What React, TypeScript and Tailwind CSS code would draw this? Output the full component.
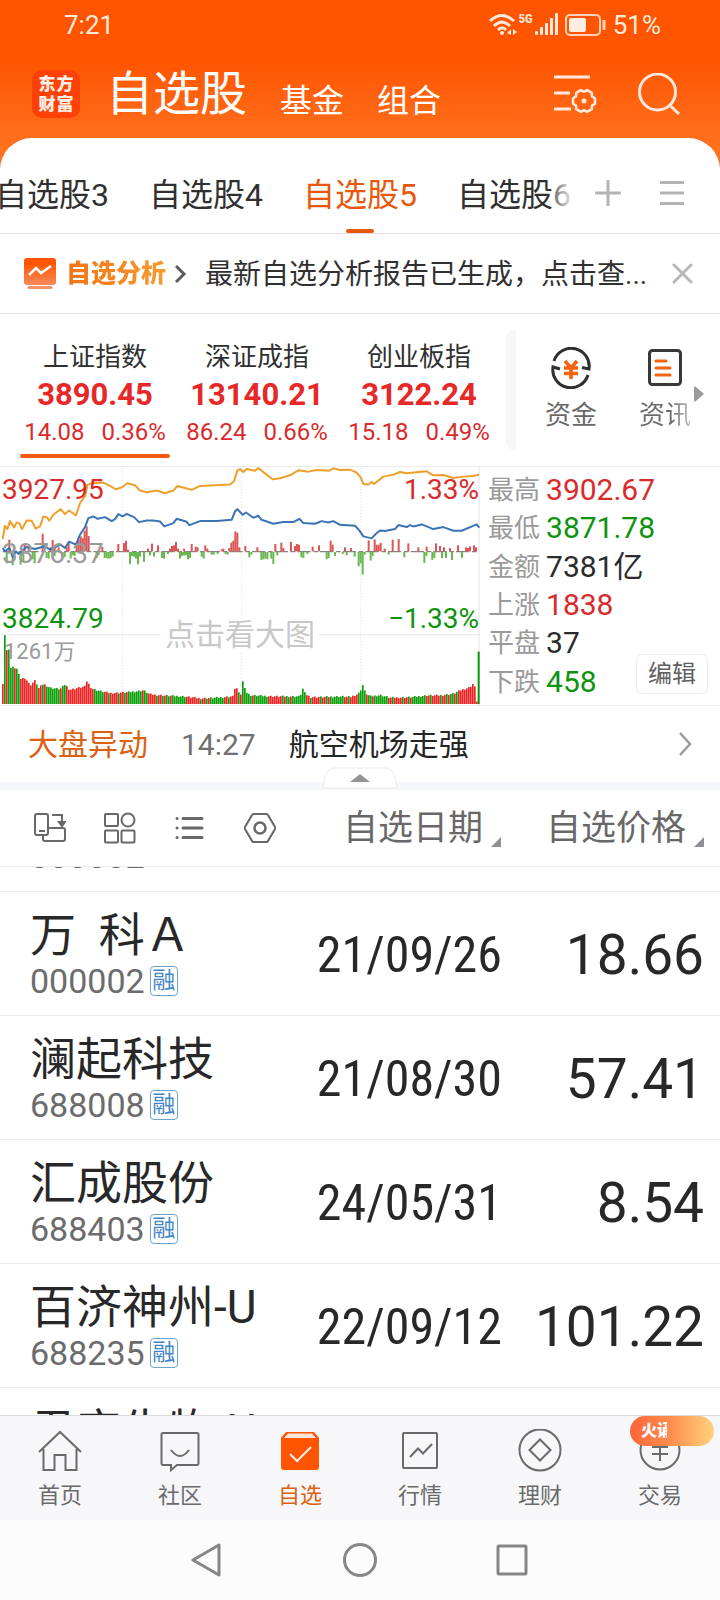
import { ReactNode, useState } from 'react'

type Index = {
  name: string
  price: string
  change: string
  percent: string
}

type Stock = {
  name: string
  code: string
  date: string
  price: string
  margin: boolean
}

const groups = ['自选股3', '自选股4', '自选股5', '自选股6']

const indexes: Index[] = [
  { name: '上证指数', price: '3890.45', change: '14.08', percent: '0.36%' },
  { name: '深证成指', price: '13140.21', change: '86.24', percent: '0.66%' },
  { name: '创业板指', price: '3122.24', change: '15.18', percent: '0.49%' },
]

const stats = [
  { label: '最高', value: '3902.67', color: 'text-[#d92b2b]' },
  { label: '最低', value: '3871.78', color: 'text-[#0d930d]' },
  { label: '金额', value: '7381亿', color: 'text-[#2b2b2b]' },
  { label: '上涨', value: '1838', color: 'text-[#d92b2b]' },
  { label: '平盘', value: '37', color: 'text-[#2b2b2b]' },
  { label: '下跌', value: '458', color: 'text-[#0d930d]' },
]

const stocks: Stock[] = [
  { name: '', code: '000002', date: '', price: '', margin: false },
  { name: '万  科Ａ', code: '000002', date: '21/09/26', price: '18.66', margin: true },
  { name: '澜起科技', code: '688008', date: '21/08/30', price: '57.41', margin: true },
  { name: '汇成股份', code: '688403', date: '24/05/31', price: '8.54', margin: true },
  { name: '百济神州-U', code: '688235', date: '22/09/12', price: '101.22', margin: true },
  { name: '君实生物-U', code: '', date: '', price: '', margin: false },
]

// chart data, in units of a third of a pixel
const priceLine =
  '8,238 15,198 22,208 30,184 42,203 50,188 58,190 66,208 80,182 95,183 107,207 120,200 130,170 140,172 148,183 160,165 182,148 195,163 207,152 228,167 240,130 248,118 256,108 262,75 275,70 310,68 330,78 347,88 365,83 382,70 405,76 420,92 440,97 470,92 495,100 520,92 532,78 560,86 575,90 600,78 690,74 702,64 712,32 720,27 730,36 740,27 765,32 775,24 792,38 818,58 840,55 870,46 895,31 925,35 950,30 988,32 1000,25 1020,30 1050,29 1070,38 1082,52 1090,72 1105,74 1115,66 1122,72 1150,50 1180,44 1200,36 1220,40 1280,34 1300,46 1330,45 1360,54 1390,50 1420,48 1438,44'

const averageLine =
  '8,265 15,275 28,265 38,292 48,275 55,283 80,262 105,268 135,260 150,270 182,255 195,265 207,246 228,255 240,225 256,200 265,175 280,170 293,177 315,172 335,184 345,178 355,163 368,170 380,162 402,172 417,187 440,182 460,182 480,185 493,200 520,190 530,177 560,186 568,196 600,184 650,184 695,180 705,155 712,148 728,165 738,158 760,174 775,168 785,180 820,192 850,187 880,187 898,177 910,190 945,192 965,184 985,188 1000,184 1020,195 1065,198 1078,212 1090,230 1115,236 1128,222 1140,212 1155,214 1185,208 1195,196 1220,202 1230,196 1240,200 1265,194 1300,208 1330,202 1360,213 1385,213 1430,194 1438,204'

const ups = [
  [28, 35], [74, 22], [86, 12], [128, 53], [152, 12], [158, 34], [164, 10], [176, 12], [200, 12], [206, 25],
  [230, 28], [236, 35], [242, 45], [248, 40], [254, 62], [260, 75], [266, 46], [307, 13], [355, 22], [372, 25],
  [378, 32], [384, 5], [444, 8], [456, 23], [474, 18], [510, 8], [516, 16], [522, 18], [528, 28], [534, 8],
  [552, 8], [575, 22], [587, 14], [593, 12], [616, 18], [622, 8], [665, 6], [670, 8], [688, 10], [694, 26],
  [700, 32], [706, 60], [712, 56], [718, 12], [736, 16], [772, 12], [826, 22], [844, 26], [850, 10], [873, 28],
  [885, 16], [891, 22], [897, 20], [938, 14], [957, 18], [992, 32], [998, 20], [1035, 12], [1053, 10], [1106, 33],
  [1124, 36], [1130, 20], [1136, 20], [1142, 25], [1154, 8], [1178, 35], [1196, 37], [1225, 24], [1255, 12],
  [1280, 14], [1308, 24], [1320, 16], [1332, 12], [1350, 10], [1374, 18], [1398, 12], [1404, 10], [1410, 15],
  [1422, 18], [1428, 12],
]

const downs = [
  [20, 34], [38, 40], [62, 38], [70, 28], [98, 22], [104, 34], [140, 18], [146, 20], [164, 12], [188, 20],
  [194, 16], [212, 20], [218, 10], [224, 12], [290, 18], [296, 10], [314, 18], [320, 18], [326, 20], [332, 18],
  [338, 14], [390, 36], [396, 12], [402, 14], [408, 20], [414, 37], [420, 14], [432, 30], [450, 10], [462, 14],
  [486, 18], [492, 20], [504, 6], [540, 20], [546, 12], [552, 10], [558, 10], [564, 22], [570, 18], [605, 14],
  [611, 20], [635, 8], [641, 8], [653, 6], [677, 6], [683, 8], [748, 16], [754, 8], [784, 24], [790, 22],
  [796, 20], [802, 22], [814, 20], [820, 36], [832, 10], [904, 16], [910, 18], [922, 6], [980, 22], [986, 18],
  [1005, 12], [1028, 6], [1040, 10], [1064, 14], [1076, 43], [1082, 34], [1088, 68], [1094, 8], [1112, 26],
  [1118, 12], [1166, 8], [1213, 16], [1273, 33], [1279, 12], [1297, 24], [1303, 18], [1326, 18], [1338, 18],
  [1356, 24], [1386, 18],
]

const volumeShape = [
  [8, 62], [14, 207], [20, 160], [26, 165], [32, 108], [40, 110], [50, 105], [60, 75], [75, 78], [90, 55],
  [105, 70], [116, 47], [130, 60], [150, 48], [180, 44], [195, 58], [208, 42], [255, 52], [260, 68], [275, 45],
  [300, 38], [330, 32], [380, 34], [430, 40], [450, 28], [500, 24], [550, 22], [600, 16], [650, 18], [698, 22],
  [704, 46], [712, 46], [718, 25], [726, 32], [729, 84], [736, 36], [750, 25], [820, 22], [900, 22], [908, 45],
  [915, 30], [930, 20], [970, 20], [1020, 22], [1050, 20], [1075, 30], [1082, 42], [1088, 56], [1096, 32],
  [1110, 22], [1140, 26], [1170, 18], [1240, 20], [1280, 25], [1320, 25], [1360, 30], [1380, 40], [1410, 50],
  [1422, 64], [1430, 8],
]

const volumeAt = (x: number) => {
  const i = volumeShape.findIndex((p) => p[0] >= x)
  if (i <= 0) return volumeShape[i === 0 ? 0 : volumeShape.length - 1][1]
  const [x0, h0] = volumeShape[i - 1]
  const [x1, h1] = volumeShape[i]
  return h0 + ((h1 - h0) * (x - x0)) / (x1 - x0)
}

const volumes = Array.from({ length: 238 }, (_, i) => {
  const x = 8 + i * 6
  const noise = ((i * 37) % 11) - 3
  const opening = [1, 3, 4, 5, 7, 8].includes(i)
  const spike = (x > 725 && x < 745) || (x > 1070 && x < 1100)
  const red = (x > 58 && x < 90) || (x > 200 && x < 280) || (x > 1375 && x < 1412)
  const green = opening || spike || (i > 8 && !red && Math.sin(i * 2.3) + Math.sin(i * 0.31) > -0.1)
  return { x, h: Math.max(4, volumeAt(x) + noise / 2), color: green ? '#0aa00a' : '#ee2222' }
})

const IndexChart = () => (
  <svg viewBox="0 21 1440 717" preserveAspectRatio="none" className="block h-full w-full" fill="none">
    <path d="M0 526H1440M1437 21V738" stroke="#ececee" strokeWidth="4" />
    <path d="M367 24V735M724 24V735M1082 24V735" stroke="#dcdcdf" strokeWidth="3" strokeDasharray="3 6" />
    <path d="M8 276H1432" stroke="#8b8180" strokeWidth="4" strokeDasharray="40 8 14 6" />
    {ups.map(([x, h]) => (
      <rect key={x} x={x - 3} y={275 - h} width="6" height={h} fill="#dc5656" />
    ))}
    {downs.map(([x, h]) => (
      <rect key={x} x={x - 3} y={277} width="6" height={h} fill="#66b84f" />
    ))}
    {volumes.map((v) => (
      <rect key={v.x} x={v.x - 2} y={735 - v.h} width="5" height={v.h} fill={v.color} />
    ))}
    <rect x="1433" y="577" width="6" height="158" fill="#0d930d" />
    <polyline points={averageLine} stroke="#3a74b4" strokeWidth="6" strokeLinejoin="round" />
    <polyline points={priceLine} stroke="#efa02a" strokeWidth="6" strokeLinejoin="round" />
  </svg>
)

const StatusBar = () => (
  <div className="flex h-[50px] items-center justify-between pr-[59px] pl-16 text-[26px] text-[#ffe9dd]">
    <span>7:21</span>
    <div className="flex items-center gap-[6px]">
      <div className="flex items-start gap-[2px]">
        <svg width="28" height="24" viewBox="0 0 28 24" fill="none" stroke="currentColor" strokeWidth="3">
          <path d="M1 8Q13 -3 25 8M5 13Q13 5 21 13M9 17Q13 13 17 17" />
          <circle cx="13" cy="20" r="2" fill="currentColor" stroke="none" />
          <path d="M22 16v6l-4-2zM24 16v6l4-3z" fill="currentColor" stroke="none" />
        </svg>
        <span className="font-['Roboto_Condensed',Roboto] text-[13px] leading-3 font-bold">5G</span>
        <svg width="24" height="24" viewBox="0 0 24 24" fill="currentColor">
          <rect x="0" y="18" width="3" height="4" rx="1" />
          <rect x="5" y="14" width="3" height="8" rx="1" />
          <rect x="10" y="10" width="3" height="12" rx="1" />
          <rect x="15" y="5" width="3" height="17" rx="1" />
          <rect x="20" y="0" width="3" height="22" rx="1" />
        </svg>
      </div>
      <svg width="42" height="24" viewBox="0 0 42 24" fill="none">
        <rect x="1" y="2" width="34" height="20" rx="4" stroke="#ffd3b8" strokeWidth="2" />
        <rect x="4" y="5" width="17" height="14" rx="2" fill="#ffece2" />
        <path d="M39 7v10" stroke="#ffd3b8" strokeWidth="3" />
      </svg>
      <span>51%</span>
    </div>
  </div>
)

const TitleBar = () => (
  <div className="flex h-[88px] items-center pr-10 pl-8 text-white">
    <a
      href="#home"
      className="grid size-12 grid-cols-2 place-content-center justify-items-center rounded-[10px] bg-[#ff4108] px-[6px] text-[17px] leading-5 font-black text-[#fff0e6]"
    >
      <span>东</span>
      <span>方</span>
      <span>财</span>
      <span>富</span>
    </a>
    <nav className="ml-[26px] flex items-end gap-[33px] text-[32px] leading-[50px]">
      <a href="#stocks" className="text-[47px] leading-[64px]">
        自选股
      </a>
      <a href="#funds">基金</a>
      <a href="#combos">组合</a>
    </nav>
    <button aria-label="筛选设置" className="ml-auto">
      <svg width="44" height="42" viewBox="0 0 44 42" fill="none" stroke="#ffe9dc" strokeWidth="3">
        <path d="M0 4H36M0 20H16M0 36H17" />
        <path
          d="M41 25.300V30.700L38 32.600L37.800 36.100L33.100 38.900L30 37.200L26.900 38.900L22.200 36.100L22 32.600L19 30.700V25.300L22 23.400L22.200 19.900L26.900 17.100L30 18.800L33.100 17.100L37.800 19.900L38 23.400Z"
          strokeWidth="2.5"
          strokeLinejoin="round"
        />
        <circle cx="30" cy="28" r="2.5" fill="#ffe9dc" stroke="none" />
      </svg>
    </button>
    <button aria-label="搜索" className="ml-10">
      <svg width="42" height="42" viewBox="0 0 42 42" fill="none" stroke="#ffe9dc" strokeWidth="3">
        <circle cx="19.500" cy="19" r="18" />
        <path d="M31.500 32L41 41" />
      </svg>
    </button>
  </div>
)

const GroupTabs = () => {
  const [active, setActive] = useState(2)

  return (
    <div className="flex h-24 items-stretch border-b border-[#e4e4e6]">
      <div className="relative min-w-0 flex-1 overflow-hidden">
        <div className="-ml-[5px] flex h-full gap-10">
          {groups.map((g, i) => (
            <button
              key={g}
              onClick={() => setActive(i)}
              className={`relative shrink-0 pt-[18px] text-[32px] ${i === active ? 'text-[#e8580c]' : 'text-[#303030]'}`}
            >
              {g}
              {i === active && (
                <span className="absolute bottom-0 left-1/2 h-1 w-7 -translate-x-1/2 rounded-full bg-[#e8580c]" />
              )}
            </button>
          ))}
        </div>
        <span className="absolute inset-y-0 right-0 w-6 bg-linear-to-r from-white/20 to-white" />
      </div>
      <button aria-label="添加分组" className="pt-[14px] pl-5">
        <svg width="26" height="26" viewBox="0 0 26 26" stroke="#b4b4b4" strokeWidth="3" strokeLinecap="round">
          <path d="M13 1V25M1 13H25" />
        </svg>
      </button>
      <button aria-label="管理分组" className="pt-[14px] pr-9 pl-[39px]">
        <svg width="24" height="26" viewBox="0 0 24 26" stroke="#b4b4b4" strokeWidth="3" strokeLinecap="round">
          <path d="M1 2.5H23M1 13H23M1 23.5H23" />
        </svg>
      </button>
    </div>
  )
}

const ReportBar = () => (
  <div className="flex h-20 items-center border-b border-[#e4e4e6] pr-[27px] pl-6">
    <svg width="32" height="32" viewBox="0 0 32 32" fill="none">
      <defs>
        <linearGradient id="report" x1="0" y1="0" x2="0" y2="1">
          <stop offset="0.2" stopColor="#ff5500" />
          <stop offset="1" stopColor="#f98a5c" />
        </linearGradient>
      </defs>
      <rect width="32" height="27" rx="3" fill="url(#report)" />
      <path d="M5 17L12 10L17 15L27 8" stroke="#fff" strokeWidth="2.5" />
      <path d="M5 29.5H27" stroke="#f59468" strokeWidth="3" strokeLinecap="round" />
    </svg>
    <a
      href="#report"
      className="ml-[10px] bg-linear-to-r from-[#f47314] to-[#f79a2e] bg-clip-text text-[25px] font-black text-transparent"
    >
      自选分析
    </a>
    <svg width="12" height="20" viewBox="0 0 12 20" fill="none" stroke="#5c5c5c" strokeWidth="3" className="ml-[9px]">
      <path d="M1 2L9 10L1 18" />
    </svg>
    <p className="ml-[18px] min-w-0 flex-1 pt-[3px] text-[28px] leading-10 whitespace-nowrap text-[#303030]">
      最新自选分析报告已生成，点击查...
    </p>
    <button aria-label="关闭">
      <svg width="21" height="21" viewBox="0 0 21 21" stroke="#b8b8b8" strokeWidth="3" strokeLinecap="round">
        <path d="M2 2L19 19M19 2L2 19" />
      </svg>
    </button>
  </div>
)

const Indexes = () => {
  const [active, setActive] = useState(0)

  return (
    <section className="flex border-b border-[#ececee] pl-[14px]">
      <div className="grid flex-1 grid-cols-3">
        {indexes.map((d, i) => (
          <button key={d.name} onClick={() => setActive(i)} className="flex flex-col items-center pt-[25px] pb-2 text-[#d92b2b]">
            <span className="text-[26px] leading-9 text-[#303030]">{d.name}</span>
            <span className="text-[31px] leading-10 font-bold text-[#e62828]">{d.price}</span>
            <span className="flex gap-[17px] text-2xl leading-[34px]">
              <span>{d.change}</span>
              <span>{d.percent}</span>
            </span>
            {i === active && <span className="mt-[5px] h-1 w-[150px] rounded-full bg-[#fa5a0c]" />}
          </button>
        ))}
      </div>
      <div className="mt-4 ml-[6px] h-[120px] w-[10px] rounded-l-lg bg-[#f7f7fa]" />
      <div className="relative flex w-[204px] gap-[42px] pt-[33px] pl-[29px] text-[26px] text-[#6a6a6a]">
        <button className="flex flex-col items-center self-start">
          <svg width="40" height="42" viewBox="0 0 40 42" fill="none" stroke="#303030" strokeWidth="3">
            <path d="M3 14A18 18 0 0 1 38 22L31 20.500M37 28A18 18 0 0 1 2 20L9 22" />
            <path d="M14 14L20 21L26 14M13 21H27M13 26.500H27M20 21V32" stroke="#f26312" strokeWidth="3.5" />
          </svg>
          <span className="mt-[6px] leading-10">资金</span>
        </button>
        <button className="flex flex-col items-center self-start">
          <svg width="34" height="42" viewBox="0 0 34 42" fill="none" stroke="#383838" strokeWidth="3">
            <rect x="1.500" y="3.500" width="31" height="34" rx="3" />
            <path d="M8 14H18M8 21H22M8 28H22" stroke="#f26312" strokeWidth="3" strokeLinecap="round" />
          </svg>
          <span className="mt-[6px] bg-linear-to-r from-[#6a6a6a] from-60% to-[#c8c8c8] bg-clip-text leading-10 text-transparent">
            资讯
          </span>
        </button>
        <svg width="10" height="16" viewBox="0 0 10 16" fill="#9b9b9b" className="absolute top-[72px] right-4">
          <path d="M0 1Q0 0 2 1L10 8L2 15Q0 16 0 15Z" />
        </svg>
      </div>
    </section>
  )
}

const MarketPanel = () => (
  <section className="flex h-[239px] border-b border-[#ececee]">
    <div className="relative w-2/3 text-[28px] leading-8">
      <IndexChart />
      <span className="absolute top-[7px] left-[2px] text-[#d92b2b]">3927.95</span>
      <span className="absolute top-[71px] left-[2px] text-[#9a9a9a]">3876.37</span>
      <span className="absolute top-[136px] left-[2px] text-[#0d930d]">3824.79</span>
      <span className="absolute top-[7px] right-[1px] text-[#d92b2b]">1.33%</span>
      <span className="absolute top-[136px] right-[1px] text-[#0d930d]">−1.33%</span>
      <span className="absolute top-[169px] left-1 text-[22px] text-[#9a9a9a]">1261万</span>
      <button className="absolute top-[152px] left-1/2 -translate-x-1/2 bg-white px-1 text-[30px] whitespace-nowrap text-[#c8c8c8]">
        点击看大图
      </button>
    </div>
    <div className="relative flex w-1/3 flex-col py-1 pl-2 leading-8">
      {stats.map((s) => (
        <div key={s.label} className="flex flex-1 items-center gap-[6px]">
          <span className="text-[26px] text-[#9a9a9a]">{s.label}</span>
          <span className={`text-[30px] ${s.color}`}>{s.value}</span>
        </div>
      ))}
      <button className="absolute right-3 bottom-[11px] h-10 w-[72px] rounded-md border border-[#ececee] bg-white text-2xl text-[#606060]">
        编辑
      </button>
    </div>
  </section>
)

const AlertBar = () => (
  <a href="#alerts" className="relative flex h-21 items-center border-b-8 border-[#f6f7fa] pr-7 pl-7 text-[30px]">
    <span className="text-[#dd6011]">大盘异动</span>
    <span className="ml-[33px] text-[#707070]">14:27</span>
    <span className="ml-[33px] text-[#252525]">航空机场走强</span>
    <svg width="13" height="24" viewBox="0 0 13 24" fill="none" stroke="#9b9b9b" strokeWidth="2.5" className="ml-auto">
      <path d="M1 1L11 12L1 23" />
    </svg>
    <svg
      width="76"
      height="22"
      viewBox="0 0 76 22"
      fill="#fff"
      stroke="#ececee"
      className="absolute -bottom-[7px] left-1/2 -translate-x-1/2"
    >
      <path d="M1 21C3 7 5 1 13 1H63C71 1 73 7 75 21Z" />
      <path d="M28 15L38 7L48 15Z" fill="#959595" stroke="none" />
    </svg>
  </a>
)

const SortButton = ({ children }: { children: ReactNode }) => (
  <button className="flex items-end justify-end gap-2 pt-[2px] text-[35px] leading-[44px]">
    {children}
    <svg width="10" height="10" viewBox="0 0 10 10" fill="#8f9094" className="mb-1">
      <path d="M10 0V10H0Z" />
    </svg>
  </button>
)

const Toolbar = () => (
  <div className="flex h-[77px] shrink-0 items-center border-b border-[#ececee] pr-4 text-[#686868]">
    <div className="flex flex-1 gap-[38px] pl-[34px]">
      <button aria-label="切换布局">
        <svg width="32" height="32" viewBox="0 0 32 32" fill="none" stroke="currentColor" strokeWidth="2">
          <rect x="1" y="2" width="13" height="21" rx="2" />
          <path d="M14 16H29Q31 16 31 18V27Q31 29 29 29H11Q9 29 9 27V23M5 19H11" />
          <path d="M18 3H28V11" />
          <path d="M25 10H31L28 14Z" fill="currentColor" />
        </svg>
      </button>
      <button aria-label="宫格">
        <svg width="32" height="32" viewBox="0 0 32 32" fill="none" stroke="currentColor" strokeWidth="2">
          <rect x="1" y="2" width="13" height="12" rx="1" />
          <circle cx="24" cy="8" r="6.500" />
          <rect x="1" y="18.500" width="13" height="12" rx="1" />
          <rect x="17.500" y="18.500" width="13" height="12" rx="1" />
        </svg>
      </button>
      <button aria-label="列表">
        <svg width="32" height="32" viewBox="0 0 32 32" stroke="currentColor" strokeWidth="3" strokeLinecap="round">
          <path d="M9 6.500H28M9 16H28M9 25.500H28M3 6.500H3.100M3 16H3.100M3 25.500H3.100" />
        </svg>
      </button>
      <button aria-label="设置">
        <svg width="32" height="32" viewBox="0 0 32 32" fill="none" stroke="currentColor" strokeWidth="2">
          <path d="M9.500 2H22.500Q23.500 2 24 3L31 15Q31.500 16 31 17L24 29Q23.500 30 22.500 30H9.500Q8.500 30 8 29L1 17Q.5 16 1 15L8 3Q8.500 2 9.500 2Z" />
          <circle cx="16" cy="16" r="5.500" strokeWidth="2.500" />
        </svg>
      </button>
    </div>
    <SortButton>自选日期</SortButton>
    <div className="flex w-[203px] justify-end">
      <SortButton>自选价格</SortButton>
    </div>
  </div>
)

const StockTable = () => (
  <div className="min-h-0 flex-1 overflow-hidden">
    {/* list is scrolled into the first row */}
    <table className="-mt-[100px] w-full table-fixed text-[#282828]">
      <tbody>
        {stocks.map((s, i) => (
          <tr key={i} className="h-31 border-b border-[#ececee]">
            <td className="p-0 pl-[30px] align-top">
              <div className="h-[71px] pt-[15px] text-[46px] leading-[56px] whitespace-pre">{s.name}</div>
              <div className="flex h-9 items-center gap-[5px] text-[34px] leading-9 text-[#6c6c6c]">
                {s.code}
                {s.margin && (
                  <span className="flex h-[30px] w-7 items-center justify-center rounded border border-[#6fa3cf] text-[23px] leading-7 text-[#4285c8]">
                    融
                  </span>
                )}
              </div>
            </td>
            <td className="w-[206px] p-0 pt-1 text-right font-['Roboto_Condensed',Roboto] text-[50px] leading-[60px]">
              {s.date}
            </td>
            <td className="w-[218px] p-0 pt-1 pr-4 text-right text-[55px] leading-[60px]">{s.price}</td>
          </tr>
        ))}
      </tbody>
    </table>
  </div>
)

const NavItem = ({ label, active, children }: { label: string; active?: boolean; children: ReactNode }) => (
  <a
    href="#nav"
    className={`relative flex flex-1 flex-col items-center pt-[13px] text-[22px] ${active ? 'text-[#dd6011]' : 'text-[#6a6a6a]'}`}
  >
    <svg width="44" height="44" viewBox="0 0 44 44" fill="none" stroke="currentColor" strokeWidth="2">
      {children}
    </svg>
    <span className="mt-[7px] leading-8">{label}</span>
  </a>
)

const BottomNav = () => (
  <nav className="relative flex h-[105px] shrink-0 border-t border-[#dcdcdf] bg-[#f7f7fa]">
    <NavItem label="首页">
      <path d="M1 23L22 3L43 23M5.500 20V41H16.500V26H27.500V41H38.500V20" />
    </NavItem>
    <NavItem label="社区">
      <path d="M5 4H39Q40.500 4 40.500 5.500V34Q40.500 36 39 36H19L13 41V36H5Q3.500 36 3.500 34V5.500Q3.500 4 5 4Z" />
      <path d="M13 21Q22 33 31 21" />
    </NavItem>
    <NavItem label="自选" active>
      <path d="M3 9L8 3H36L41 9V38Q41 41 38 41H6Q3 41 3 38Z" fill="#ff5500" stroke="none" />
      <path d="M6 9L10 4.500H34L38 9Z" fill="#fbe6da" stroke="none" />
      <path d="M12 25L19 32L33 18" stroke="#fff0e6" />
    </NavItem>
    <NavItem label="行情">
      <rect x="5" y="4" width="34" height="35" rx="1" />
      <path d="M12 28L20 19.500L25 24.500L34 15" />
    </NavItem>
    <NavItem label="理财">
      <circle cx="22" cy="21" r="20.500" />
      <path d="M22 10.500L32.500 21L22 31.500L11.500 21Z" />
    </NavItem>
    <NavItem label="交易">
      <circle cx="22" cy="21" r="19.500" />
      <path d="M15 10L22 17L29 10M14 18H30M14 25H30M22 17V32" />
    </NavItem>
    <span className="absolute top-0 right-[6px] h-[30px] w-21 rounded-full bg-linear-to-r from-[#ff6339] via-[#ff8f4e] to-[#ffd37e] pl-[11px] text-[16px] leading-[30px] font-black text-white">
      <span className="block w-[26px] overflow-hidden whitespace-nowrap">火诵</span>
    </span>
  </nav>
)

const SystemNav = () => (
  <div className="flex h-20 shrink-0 items-center justify-center gap-[118px] bg-[#fcfcfc] text-[#868686]">
    <button aria-label="返回">
      <svg width="34" height="34" viewBox="0 0 34 34" fill="none" stroke="currentColor" strokeWidth="3" strokeLinejoin="round">
        <path d="M28 2V32L2 17Z" />
      </svg>
    </button>
    <button aria-label="主屏幕">
      <svg width="34" height="34" viewBox="0 0 34 34" fill="none" stroke="currentColor" strokeWidth="3">
        <circle cx="17" cy="17" r="15.500" />
      </svg>
    </button>
    <button aria-label="最近任务">
      <svg width="34" height="34" viewBox="0 0 34 34" fill="none" stroke="currentColor" strokeWidth="3">
        <rect x="3" y="3" width="28" height="28" rx="1" />
      </svg>
    </button>
  </div>
)

export default function App() {
  return (
    <div className="flex h-screen flex-col bg-linear-to-b from-[#ff5500] from-[60px] to-[#ff7a24] to-[180px] font-[Roboto,'Noto_Sans_CJK_SC',sans-serif]">
      <header className="shrink-0">
        <StatusBar />
        <TitleBar />
      </header>
      <main className="flex min-h-0 flex-1 flex-col rounded-t-[32px] bg-white">
        <GroupTabs />
        <ReportBar />
        <Indexes />
        <MarketPanel />
        <AlertBar />
        <Toolbar />
        <StockTable />
      </main>
      <BottomNav />
      <SystemNav />
    </div>
  )
}
